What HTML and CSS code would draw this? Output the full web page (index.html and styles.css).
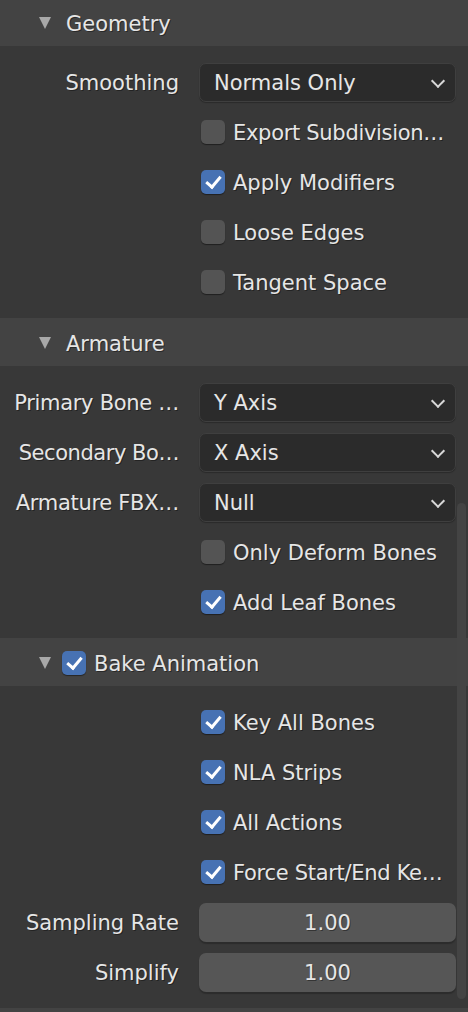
FILE: index.html
```html
<!DOCTYPE html>
<html>
<head>
<meta charset="utf-8">
<link rel="stylesheet" href="styles.css">
</head>
<body>
<div class="region">
  <section class="panel first">
    <div class="header"><span class="tri"></span><span class="title">Geometry</span></div>
    <div class="body">
      <div class="row"><div class="label">Smoothing</div><div class="select"><span>Normals Only</span><span class="chev"></span></div></div>
      <div class="row"><div></div><div class="check"><span class="box"></span><span class="clip">Export Subdivision…</span></div></div>
      <div class="row"><div></div><div class="check"><span class="box on"></span><span>Apply Modifiers</span></div></div>
      <div class="row"><div></div><div class="check"><span class="box"></span><span>Loose Edges</span></div></div>
      <div class="row"><div></div><div class="check"><span class="box"></span><span>Tangent Space</span></div></div>
    </div>
  </section>
  <section class="panel">
    <div class="header"><span class="tri"></span><span class="title">Armature</span></div>
    <div class="body">
      <div class="row"><div class="label clip">Primary Bone …</div><div class="select"><span>Y Axis</span><span class="chev"></span></div></div>
      <div class="row"><div class="label clip tight">Secondary Bo…</div><div class="select"><span>X Axis</span><span class="chev"></span></div></div>
      <div class="row"><div class="label clip">Armature FBX…</div><div class="select"><span>Null</span><span class="chev"></span></div></div>
      <div class="row"><div></div><div class="check"><span class="box"></span><span>Only Deform Bones</span></div></div>
      <div class="row"><div></div><div class="check"><span class="box on"></span><span>Add Leaf Bones</span></div></div>
    </div>
  </section>
  <section class="panel">
    <div class="header"><span class="tri"></span><span class="box on hbox"></span><span class="title">Bake Animation</span></div>
    <div class="body">
      <div class="row"><div></div><div class="check"><span class="box on"></span><span>Key All Bones</span></div></div>
      <div class="row"><div></div><div class="check"><span class="box on"></span><span>NLA Strips</span></div></div>
      <div class="row"><div></div><div class="check"><span class="box on"></span><span>All Actions</span></div></div>
      <div class="row"><div></div><div class="check"><span class="box on"></span><span class="clip">Force Start/End Ke…</span></div></div>
      <div class="row"><div class="label">Sampling Rate</div><div class="num">1.00</div></div>
      <div class="row"><div class="label">Simplify</div><div class="num">1.00</div></div>
    </div>
  </section>
  <section class="panel">
    <div class="header"></div>
  </section>
  <div class="scrollbar"></div>
</div>
</body>
</html>
```

FILE: styles.css
```css
html, body {
  margin: 0;
  padding: 0;
  background: #383838;
}
body {
  width: 468px;
  height: 1012px;
  overflow: hidden;
  font-family: "DejaVu Sans", sans-serif;
  font-size: 21px;
  color: #e6e6e6;
}
.region {
  position: relative;
  height: 1012px;
  overflow: hidden;
}
.panel.first {
  margin-top: -2px;
}
.header {
  height: 48px;
  background: #434343;
  display: flex;
  align-items: center;
  padding-left: 39px;
  box-sizing: border-box;
}
.tri {
  width: 0;
  height: 0;
  border-left: 6px solid transparent;
  border-right: 6px solid transparent;
  border-top: 12px solid #a8a8a8;
  margin-right: 15px;
  margin-top: 2px;
}
.title {
  text-shadow: 1px 1px 0 rgba(0, 0, 0, 0.4);
  padding-top: 3px;
}
.clip {
  letter-spacing: -0.3px;
}
.clip.tight {
  letter-spacing: -0.45px;
}
.hbox {
  margin-left: -4px;
  margin-right: 8px;
  margin-top: 2px;
  width: 25px;
  height: 25px;
  box-shadow: 0 0 0 1px #2a2a2a, 0 1px 1px 1px rgba(0,0,0,0.3);
}
.body {
  background: #383838;
  padding: 11px 12px 11px 0;
}
.row {
  height: 50px;
  display: grid;
  grid-template-columns: 179px 1fr;
  column-gap: 20px;
  align-items: center;
}
.label {
  text-align: right;
  white-space: nowrap;
  padding-top: 2px;
  text-shadow: 1px 1px 0 rgba(0, 0, 0, 0.4);
}
.select {
  height: 39px;
  box-sizing: border-box;
  background: #2b2b2b;
  border: 1px solid #3f3f3f;
  border-radius: 7px;
  display: flex;
  align-items: center;
  justify-content: space-between;
  padding: 2px 10px 0 14px;
  box-shadow: 0 1px 1px rgba(0,0,0,0.25);
}
.chev {
  width: 8px;
  height: 8px;
  border-right: 2px solid #d8d8d8;
  border-bottom: 2px solid #d8d8d8;
  transform: rotate(45deg);
  margin-top: -4px;
  margin-right: 2px;
}
.check {
  display: flex;
  align-items: center;
  gap: 8px;
  padding-left: 2px;
  white-space: nowrap;
  text-shadow: 1px 1px 0 rgba(0, 0, 0, 0.4);
}
.check span:last-child {
  padding-top: 2px;
}
.box {
  width: 24px;
  height: 24px;
  flex: none;
  border-radius: 5px;
  background: #545454;
  box-shadow: 0 1px 1px rgba(0,0,0,0.45);
  position: relative;
  box-sizing: border-box;
}
.box.on {
  background: #4772b3;
}
.box.on::after {
  content: "";
  position: absolute;
  left: 8px;
  top: 3px;
  width: 6px;
  height: 12px;
  border-right: 3px solid #fff;
  border-bottom: 3px solid #fff;
  transform: rotate(40deg);
}
.num {
  height: 39px;
  box-sizing: border-box;
  background: #565656;
  border-radius: 7px;
  display: flex;
  align-items: center;
  justify-content: center;
  padding-top: 2px;
  box-shadow: 0 2px 1px #2c2c2c;
  text-shadow: 1px 1px 0 rgba(0, 0, 0, 0.4);
}
.scrollbar {
  position: absolute;
  right: 2px;
  top: 503px;
  width: 9px;
  height: 496px;
  border-radius: 5px;
  background: #444444;
}
```
